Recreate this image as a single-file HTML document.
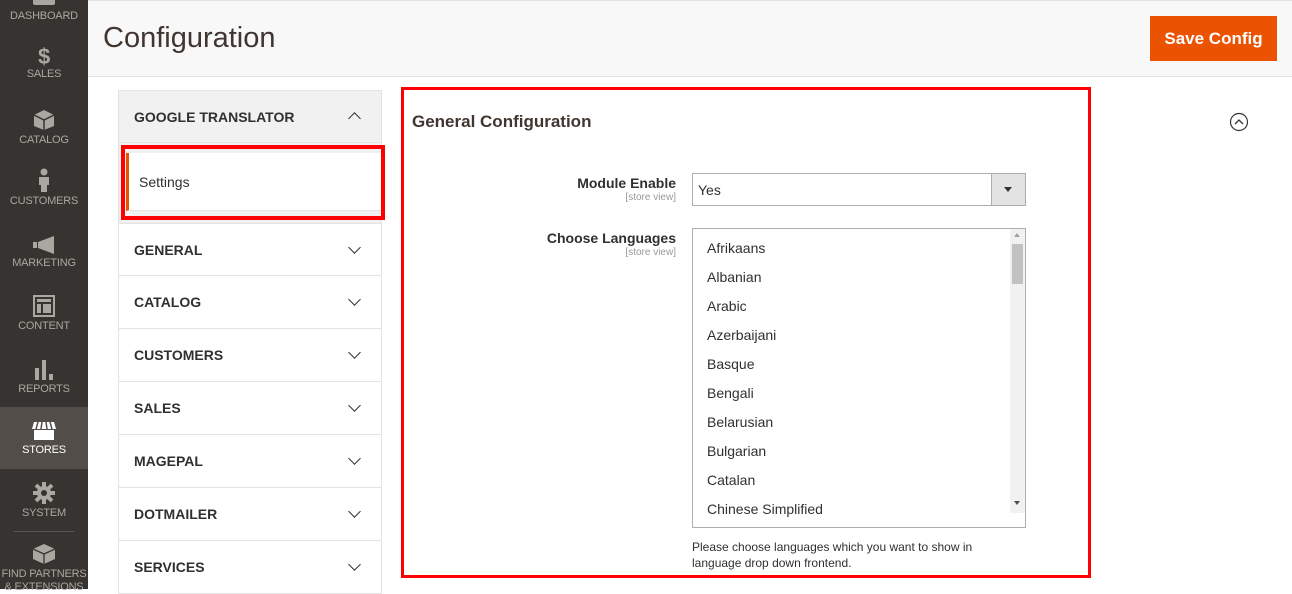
<!DOCTYPE html>
<html><head><meta charset="utf-8"><style>
*{box-sizing:border-box;margin:0;padding:0}
body{width:1292px;height:589px;overflow:hidden;background:#fff;font-family:"Liberation Sans",sans-serif;color:#303030;position:relative}
.a{position:absolute}
#side{left:0;top:0;width:88px;height:589px;background:#373330}
.ni{position:absolute;left:0;width:88px;text-align:center;color:#aaa6a0;font-size:11px;letter-spacing:-0.2px}
.ni svg{display:block;margin:0 auto 3px}
#hdr{left:88px;top:0;width:1204px;height:77px;background:#f8f8f8;border-bottom:1px solid #e3e3e3;border-top:1px solid #e3e3e3}
h1{position:absolute;left:103px;top:22px;font-weight:normal;font-size:29px;color:#41362f}
#save{left:1150px;top:16px;width:127px;height:45px;background:#eb5202;color:#fff;font-size:17px;font-weight:bold;text-align:center;line-height:45px}
.tab{position:absolute;left:118px;width:264px;height:53px;border:1px solid #e3e3e3;border-top:none;font-weight:bold;font-size:14px;color:#303030;padding:0 0 0 15px;line-height:52px;background:#fff}
.tab:after{content:"";position:absolute;right:22px;top:19px;width:8px;height:8px;border-right:1.5px solid #333;border-bottom:1.5px solid #333;transform:rotate(45deg)}
.lab{position:absolute;right:616px;text-align:right;font-weight:bold;font-size:14px;color:#303030}
.lab small{display:block;font-weight:normal;font-size:10px;color:#999;margin-top:1px}
.opt{position:absolute;left:707px;font-size:14px;color:#303030}
</style></head><body>
<div id="side" class="a">
<div class="ni" style="top:-5px"><div style="width:22px;height:10px;background:#aaa6a0;margin:0 auto 5px;border-radius:0 0 2px 2px"></div>DASHBOARD</div>
<div class="ni" style="top:46px"><div style="font-size:22px;font-weight:bold;color:#aaa6a0;line-height:22px">$</div>SALES</div>
<div class="ni" style="top:109px"><svg width="22" height="22" viewBox="0 0 22 22"><path d="M11 1L21 6V17L11 21L1 17V6Z" fill="#aaa6a0"/><path d="M1 6L11 11L21 6M11 11V21" stroke="#373330" stroke-width="1.5" fill="none"/></svg>CATALOG</div>
<div class="ni" style="top:168px"><svg width="14" height="24" viewBox="0 0 14 24"><circle cx="7" cy="4" r="3.5" fill="#aaa6a0"/><path d="M2 9H12V17H10V24H4V17H2Z" fill="#aaa6a0"/></svg>CUSTOMERS</div>
<div class="ni" style="top:236px"><svg width="24" height="18" viewBox="0 0 24 18"><path d="M6 6L22 0V18L6 12Z M1 6H5V12H1Z" fill="#aaa6a0"/></svg>MARKETING</div>
<div class="ni" style="top:295px"><svg width="22" height="22" viewBox="0 0 22 22"><rect x="1" y="1" width="20" height="20" fill="none" stroke="#aaa6a0" stroke-width="2"/><rect x="4" y="4" width="14" height="3" fill="#aaa6a0"/><rect x="4" y="9" width="4" height="9" fill="#aaa6a0"/><rect x="10" y="9" width="8" height="9" fill="#aaa6a0"/></svg>CONTENT</div>
<div class="ni" style="top:358px"><svg width="22" height="22" viewBox="0 0 22 22"><rect x="2" y="10" width="4" height="12" fill="#aaa6a0"/><rect x="9" y="2" width="4" height="20" fill="#aaa6a0"/><rect x="16" y="16" width="4" height="6" fill="#aaa6a0"/></svg>REPORTS</div>
<div class="a" style="left:0;top:407px;width:88px;height:62px;background:#524d49"></div>
<div class="ni" style="top:421px;color:#fff"><svg width="26" height="20" viewBox="0 0 26 20"><path d="M3 1H23L25 8H1Z" fill="#fff"/><path d="M3 9H23V19H3Z" fill="#fff"/><path d="M7 1L5 8M11 1L10 8M15 1L16 8M19 1L21 8" stroke="#524d49" stroke-width="1.5"/></svg>STORES</div>
<div class="ni" style="top:482px"><svg width="22" height="22" viewBox="0 0 22 22"><circle cx="11" cy="11" r="7" fill="#aaa6a0"/><path d="M11 0V22M0 11H22M3 3L19 19M19 3L3 19" stroke="#aaa6a0" stroke-width="4"/><circle cx="11" cy="11" r="3" fill="#373330"/></svg>SYSTEM</div>
<div class="a" style="left:14px;top:531px;width:60px;height:1px;background:#5a5550"></div>
<div class="ni" style="top:543px;line-height:13px"><svg width="24" height="22" viewBox="0 0 24 22"><path d="M12 1L23 6V16L12 21L1 16V6Z" fill="#aaa6a0"/><path d="M1 6L12 11L23 6M12 11V21" stroke="#373330" stroke-width="1.3" fill="none"/></svg>FIND PARTNERS<br>&amp; EXTENSIONS</div>
</div>
<div id="hdr" class="a"></div>
<h1>Configuration</h1>
<div id="save" class="a">Save Config</div>

<div class="a" style="left:118px;top:90px;width:264px;height:53px;background:#f1f1f1;border:1px solid #e3e3e3;font-weight:bold;font-size:14px;padding-left:15px;line-height:52px">GOOGLE TRANSLATOR</div>
<div class="a" style="left:350px;top:114px;width:9px;height:9px;border-left:1.5px solid #333;border-top:1.5px solid #333;transform:rotate(45deg)"></div>
<div class="a" style="left:118px;top:143px;width:264px;height:80px;background:#f1f1f1;border-left:1px solid #e3e3e3;border-right:1px solid #e3e3e3"></div>
<div class="a" style="left:126px;top:153px;width:255px;height:58px;background:#fff;border-left:3px solid #eb5202;border-bottom:1px solid #e3e3e3;font-size:14px;padding-left:10px;line-height:58px">Settings</div>
<div class="a" style="left:121px;top:145px;width:264px;height:75px;border:4px solid #f00"></div>
<div class="tab" style="top:223px;border-top:1px solid #e3e3e3">GENERAL</div>
<div class="tab" style="top:276px">CATALOG</div>
<div class="tab" style="top:329px">CUSTOMERS</div>
<div class="tab" style="top:382px">SALES</div>
<div class="tab" style="top:435px">MAGEPAL</div>
<div class="tab" style="top:488px">DOTMAILER</div>
<div class="tab" style="top:541px">SERVICES</div>

<div class="a" style="left:401px;top:87px;width:690px;height:491px;border:3px solid #f00"></div>
<div class="a" style="left:412px;top:112px;font-weight:bold;font-size:17px;color:#41362f">General Configuration</div>
<svg class="a" style="left:1229px;top:112px" width="20" height="20" viewBox="0 0 20 20"><circle cx="10" cy="10" r="8.5" fill="none" stroke="#333" stroke-width="1.2"/><path d="M6 12L10 8L14 12" fill="none" stroke="#333" stroke-width="1.3"/></svg>

<div class="lab" style="top:175px">Module Enable<small>[store view]</small></div>
<div class="a" style="left:692px;top:173px;width:334px;height:33px;border:1px solid #adadad;font-size:14px;padding:8px 0 0 5px">Yes</div>
<div class="a" style="left:991px;top:174px;width:34px;height:31px;background:#e3e3e3;border-left:1px solid #adadad"></div>
<div class="a" style="left:1004px;top:187px;width:0;height:0;border-left:4px solid transparent;border-right:4px solid transparent;border-top:5px solid #333"></div>

<div class="lab" style="top:230px">Choose Languages<small>[store view]</small></div>
<div class="a" style="left:692px;top:228px;width:334px;height:300px;border:1px solid #adadad"></div>
<div class="a" style="left:1010px;top:229px;width:15px;height:284px;background:#f1f1f1"></div>
<div class="a" style="left:1012px;top:244px;width:11px;height:40px;background:#c1c1c1"></div>
<div class="a" style="left:1014px;top:233px;border-left:3.5px solid transparent;border-right:3.5px solid transparent;border-bottom:4px solid #a3a3a3;width:0;height:0"></div>
<div class="a" style="left:1014px;top:501px;border-left:3.5px solid transparent;border-right:3.5px solid transparent;border-top:4px solid #505050;width:0;height:0"></div>
<div class="opt" style="top:240px">Afrikaans</div>
<div class="opt" style="top:269px">Albanian</div>
<div class="opt" style="top:298px">Arabic</div>
<div class="opt" style="top:327px">Azerbaijani</div>
<div class="opt" style="top:356px">Basque</div>
<div class="opt" style="top:385px">Bengali</div>
<div class="opt" style="top:414px">Belarusian</div>
<div class="opt" style="top:443px">Bulgarian</div>
<div class="opt" style="top:472px">Catalan</div>
<div class="opt" style="top:501px">Chinese Simplified</div>
<div class="a" style="left:692px;top:539px;font-size:12px;line-height:16px;color:#303030">Please choose languages which you want to show in<br>language drop down frontend.</div>
</body></html>
